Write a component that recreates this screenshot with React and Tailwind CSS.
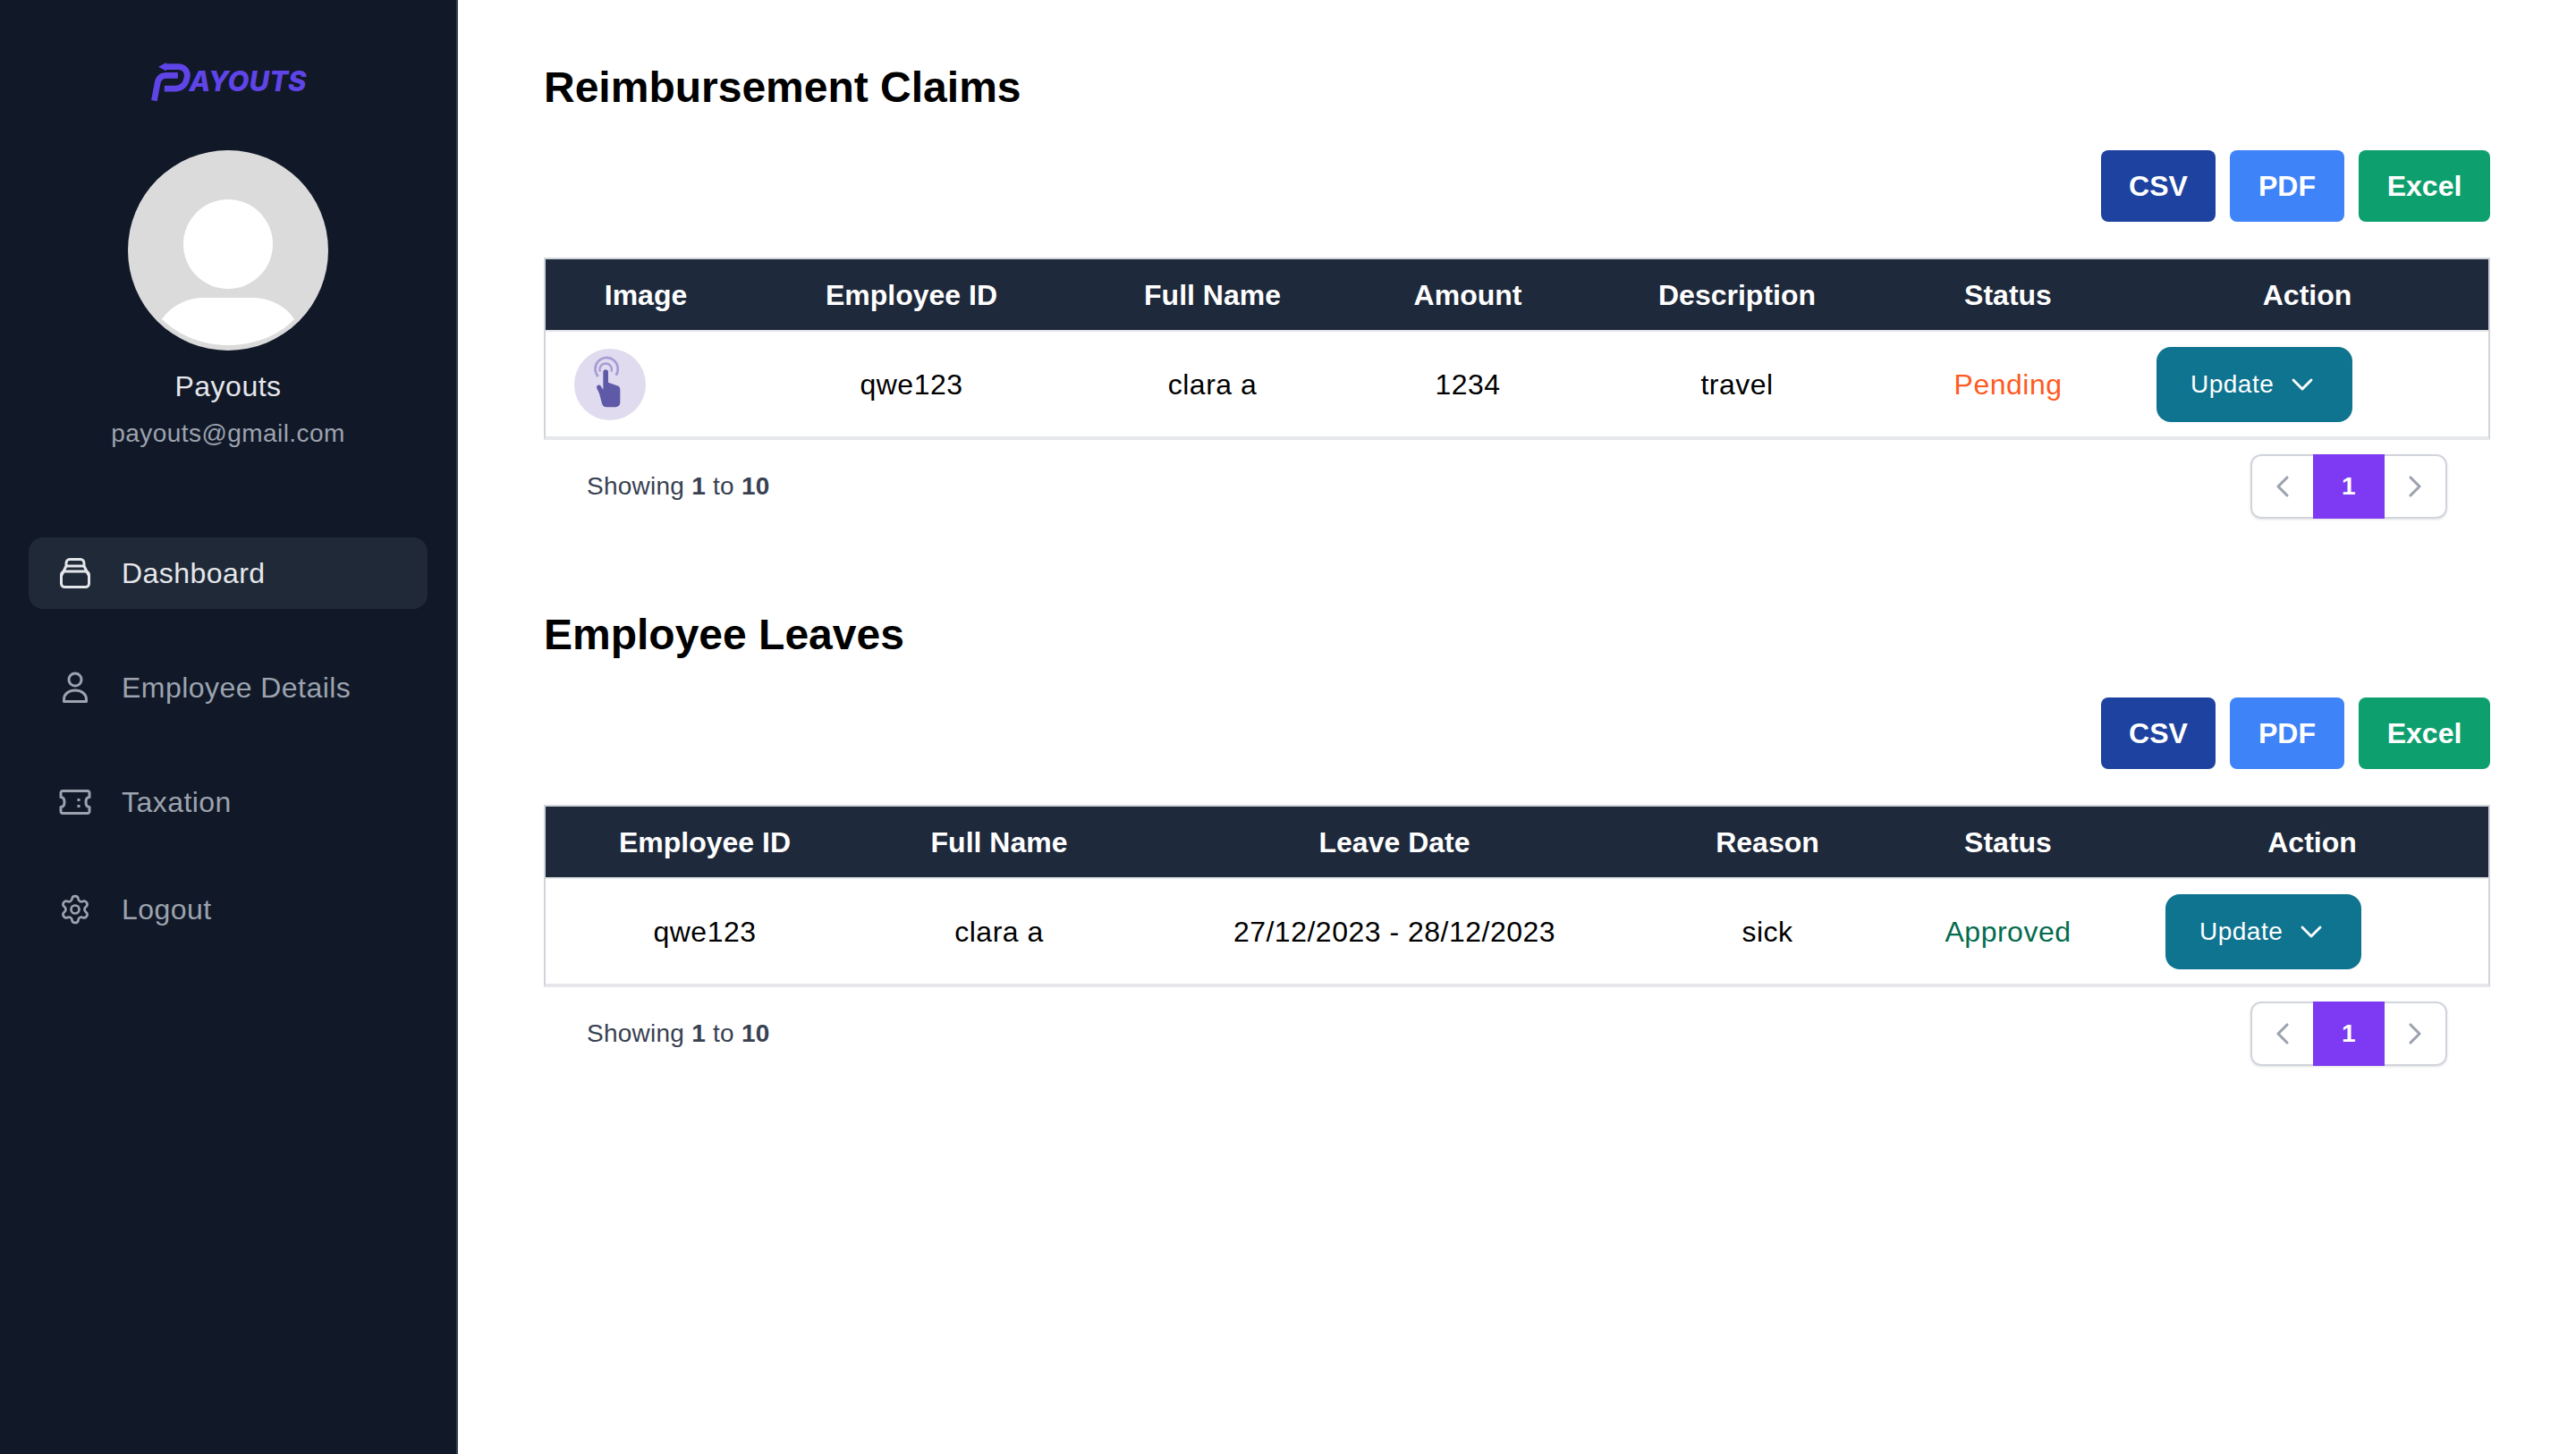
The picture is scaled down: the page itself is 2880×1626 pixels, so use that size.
import { ChevronDown, ChevronLeft, ChevronRight, Settings } from 'lucide-react';

const font = "font-['Liberation_Sans',Arial,sans-serif]";

function Logo() {
  return (
    <div className="flex items-start justify-center h-[64px] pt-[8px]">
      <svg viewBox="110 55 140 140" className="w-[47px] h-[47px] -mr-[3px] shrink-0" fill="none" stroke="#5f45e8" strokeWidth="20">
        <path d="M140 75 L166 61 L166 89 Z" fill="#5f45e8" stroke="none" />
        <path d="M160 75 H205 C228 75 240 92 235 112 C231 135 216 148 195 148 H160" />
        <path d="M126 188 L137 130 C140 112 150 104 168 104 H205" />
      </svg>
      <span className="mt-[5px] text-[31px] leading-[36px] italic font-extrabold text-[#5f45e8] font-['Inter',sans-serif]">AYOUTS</span>
    </div>
  );
}

function Avatar() {
  return (
    <svg viewBox="0 0 224 224" className="w-[224px] h-[224px]">
      <circle cx="112" cy="112" r="112" fill="#dbdbdb" />
      <circle cx="112" cy="105" r="50" fill="#fff" />
      <path d="M38 189 C50 172 68 165 85 165 H139 C156 165 175 172 186 189 C168 208 140 218 112 218 C84 218 58 208 38 189 Z" fill="#fff" />
    </svg>
  );
}

function BoxIcon() {
  return (
    <svg viewBox="0 0 36 36" className="w-[36px] h-[36px]" fill="none" stroke="currentColor" strokeWidth="3" strokeLinejoin="round">
      <rect x="2.5" y="16" width="31" height="17.5" rx="4" />
      <path d="M3 20 L8 10 V7 C8 4 10 2.5 12 2.5 H24 C26 2.5 28 4 28 7 V10 L33 20" />
      <path d="M8 10 H28" />
    </svg>
  );
}

function PersonIcon() {
  return (
    <svg viewBox="0 0 36 36" className="w-[36px] h-[36px]" fill="none" stroke="currentColor" strokeWidth="3" strokeLinejoin="round">
      <circle cx="18" cy="9" r="7" />
      <path d="M5.5 33.5 V31 C5.5 25 11 21 18 21 C25 21 30.5 25 30.5 31 V33.5 Z" />
    </svg>
  );
}

function TicketIcon() {
  return (
    <svg viewBox="0 0 36 36" className="w-[36px] h-[36px]" fill="none" stroke="currentColor" strokeWidth="3" strokeLinejoin="round">
      <path d="M4 5.5 H32 C33 5.5 34 6.5 34 7.5 V12.5 C31 12.5 30 15 30 18 C30 21 31 23.5 34 23.5 V28.5 C34 29.5 33 30.5 32 30.5 H4 C3 30.5 2 29.5 2 28.5 V23.5 C5 23.5 6 21 6 18 C6 15 5 12.5 2 12.5 V7.5 C2 6.5 3 5.5 4 5.5 Z" />
      <path d="M22 14 V17 M22 21 V24" />
    </svg>
  );
}

function NavItem({ icon, label, active, className = '' }) {
  return (
    <div className={`flex items-center h-[80px] pl-[34px] rounded-[16px] text-[32px] tracking-[0.45px] ${active ? 'bg-[#1f2937] text-[#e5e7eb]' : 'text-[#9ca3af]'} ${className}`}>
      <span className="w-[36px] flex justify-center">{icon}</span>
      <span className="ml-[34px]">{label}</span>
    </div>
  );
}

function Sidebar() {
  return (
    <aside className="w-[512px] shrink-0 bg-[#111827] border-r-[2px] border-[#374151] pt-[60px] px-[32px] min-h-[1626px]">
      <Logo />
      <div className="flex flex-col items-center mt-[44px]">
        <Avatar />
        <div className="mt-[20px] text-[32px] leading-[40px] text-[#e5e7eb] tracking-[0.5px]">Payouts</div>
        <div className="mt-[13px] text-[28px] leading-[40px] text-[#9ca3af] tracking-[0.43px]">payouts@gmail.com</div>
      </div>
      <nav className="mt-[96px] flex flex-col w-[446px]">
        <NavItem active label="Dashboard" icon={<BoxIcon />} />
        <NavItem className="mt-[48px]" label="Employee Details" icon={<PersonIcon />} />
        <NavItem className="mt-[48px]" label="Taxation" icon={<TicketIcon />} />
        <NavItem className="mt-[40px]" label="Logout" icon={<Settings size={40} strokeWidth={1.8} />} />
      </nav>
    </aside>
  );
}

function ExportButtons() {
  return (
    <div className="flex justify-end gap-[16px] text-[32px] font-semibold text-white">
      <button className="w-[128px] h-[80px] rounded-[8px] bg-[#1e429f]">CSV</button>
      <button className="w-[128px] h-[80px] rounded-[8px] bg-[#3f83f8]">PDF</button>
      <button className="w-[147px] h-[80px] rounded-[8px] bg-[#0e9f6e]">Excel</button>
    </div>
  );
}

function UpdateButton() {
  return (
    <button className="flex items-center pl-[38px] gap-[12px] w-[219px] h-[84px] rounded-[16px] bg-[#0e7490] text-white text-[28px] tracking-[0.5px]">
      Update
      <ChevronDown size={40} strokeWidth={1.7} />
    </button>
  );
}

function Pagination() {
  return (
    <div className="flex items-center justify-between pl-[48px] pr-[48px] pt-[16px] text-[#374151] text-[28px] tracking-[0.25px]">
      <div>Showing <span className="font-semibold">1</span> to <span className="font-semibold">10</span></div>
      <div className="flex h-[72px] w-[220px] rounded-[12px] border-[2px] border-[#d1d5db] shadow-sm">
        <span className="flex-1 flex items-center justify-center text-[#9ca3af]"><ChevronLeft size={40} strokeWidth={1.9} /></span>
        <span className="w-[80px] -my-[2px] flex items-center justify-center bg-[#7e3af2] text-white font-bold">1</span>
        <span className="flex-1 flex items-center justify-center text-[#9ca3af]"><ChevronRight size={40} strokeWidth={1.9} /></span>
      </div>
    </div>
  );
}

function DataTable({ columns, children }) {
  return (
    <div className="mt-[40px] border-x-[2px] border-t-[2px] border-b-[4px] border-t-[#d1d5db] border-x-[#d1d5db] border-b-[#e5e7eb]">
      <table className="w-full table-fixed text-center text-[32px] text-black">
        <thead>
          <tr className="h-[80px] bg-[#1e293b] text-white">
            {columns.map((col) => (
              <th key={col.name} style={{ width: col.width }} className={`pt-[1px] font-semibold ${col.className || ''}`}>{col.name}</th>
            ))}
          </tr>
        </thead>
        <tbody>
          <tr className="h-[118px] border-t-[2px] border-[#e5e7eb] tracking-[0.5px]">{children}</tr>
        </tbody>
      </table>
    </div>
  );
}

function TapImage() {
  return (
    <div className="ml-[32px] w-[80px] h-[80px] rounded-full bg-[#e0dbee]">
      <svg viewBox="66 45 240 240" className="w-[80px] h-[80px]">
        <path d="M146 138 A38 38 0 1 1 206 134" fill="none" stroke="#a99cd6" strokeWidth="8" />
        <path d="M153 122 A20 20 0 1 1 190 122" fill="none" stroke="#a99cd6" strokeWidth="7" />
        <path d="M163 122 C163 112 180 112 180 122 V158 L214 170 C218 172 220 176 220 182 V225 C220 235 212 241 200 241 H175 C165 241 160 235 158 225 L150 195 L142 178 C138 168 150 162 155 170 L163 182 Z" fill="#5f5aa8" />
      </svg>
    </div>
  );
}

const claimCols = [
  { name: 'Image', width: 224 },
  { name: 'Employee ID', width: 370 },
  { name: 'Full Name', width: 303 },
  { name: 'Amount', width: 268 },
  { name: 'Description', width: 334 },
  { name: 'Status', width: 272 },
  { name: 'Action', width: 401, className: 'pr-[4px]' },
];

const leaveCols = [
  { name: 'Employee ID', width: 356 },
  { name: 'Full Name', width: 302 },
  { name: 'Leave Date', width: 582 },
  { name: 'Reason', width: 252 },
  { name: 'Status', width: 286 },
  { name: 'Action', width: 394 },
];

export default function App() {
  return (
    <div className={`flex min-h-[1626px] bg-white ${font}`}>
      <Sidebar />
      <main className="flex-1 pl-[96px] pr-[96px] pt-[68px]">
        <section className="h-[612px]">
          <h1 className="text-[48px] leading-[60px] font-bold text-black mb-[40px]">Reimbursement Claims</h1>
          <ExportButtons />
          <DataTable columns={claimCols}>
            <td><TapImage /></td>
            <td>qwe123</td>
            <td>clara a</td>
            <td>1234</td>
            <td>travel</td>
            <td className="text-[#ff5a1f]">Pending</td>
            <td className="pl-[30px]"><UpdateButton /></td>
          </DataTable>
          <Pagination />
        </section>
        <section>
          <h1 className="text-[48px] leading-[60px] font-bold text-black mb-[40px]">Employee Leaves</h1>
          <ExportButtons />
          <DataTable columns={leaveCols}>
            <td>qwe123</td>
            <td>clara a</td>
            <td>27/12/2023 - 28/12/2023</td>
            <td>sick</td>
            <td className="text-[#046c4e]">Approved</td>
            <td className="pl-[33px]"><UpdateButton /></td>
          </DataTable>
          <Pagination />
        </section>
      </main>
    </div>
  );
}
